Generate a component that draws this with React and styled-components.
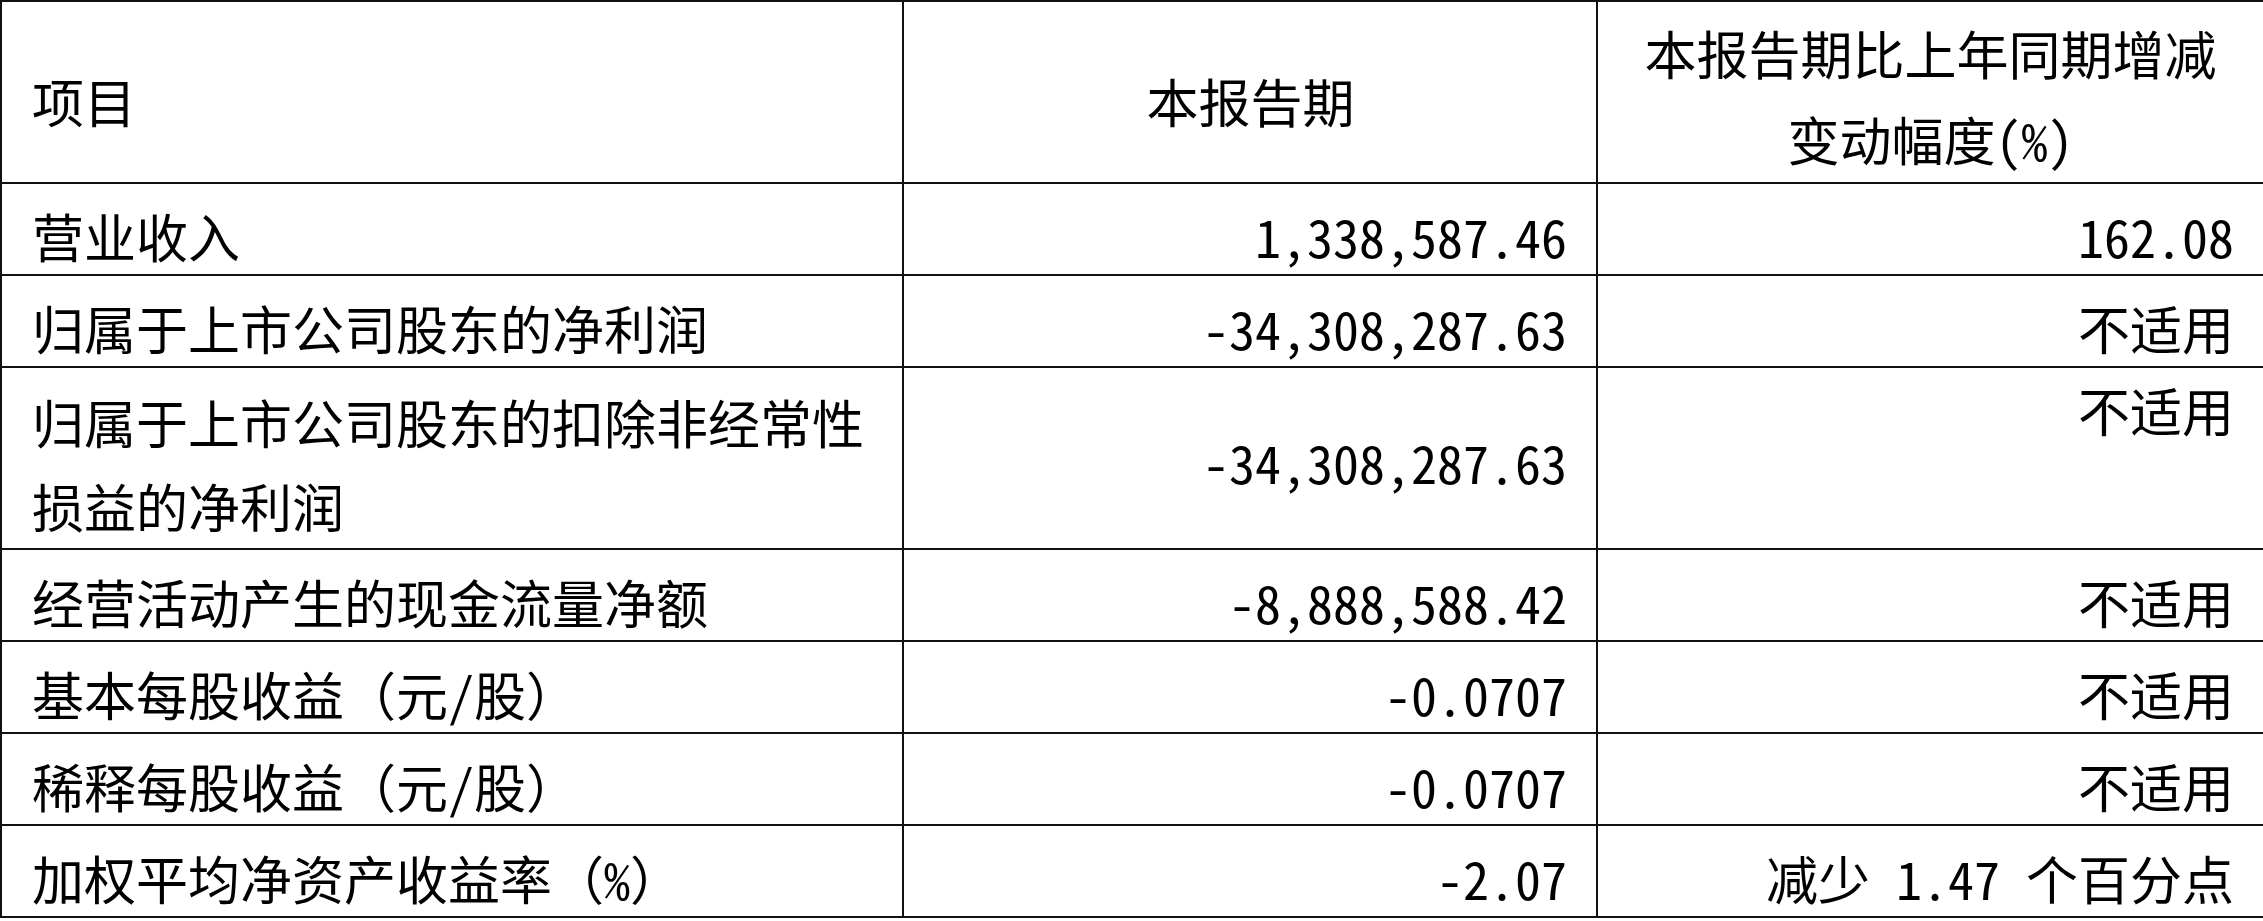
import React from "react";
import styled, { createGlobalStyle } from "styled-components";

const GlobalStyle = createGlobalStyle`
  body {
    margin: 0;
    background: #fff;
  }
`;

const Table = styled.table`
  width: 2263px;
  border-collapse: collapse;
  table-layout: fixed;
  font-family: "Noto Sans Mono CJK SC", "Noto Sans CJK SC", "Liberation Serif", sans-serif;
  font-size: 52px;
  color: #000;
`;

const Row = styled.tr`
  height: ${props => (props.$tall ? "182px" : "92px")};
`;

const Cell = styled.td`
  border: 2px solid #111;
  box-sizing: border-box;
  padding: ${props => props.$pad || "14px 29px 0 30px"};
  text-align: ${props => props.$align || "left"};
  vertical-align: ${props => (props.$top ? "top" : "middle")};
  line-height: ${props => props.$lh || "74px"};
  font-weight: 400;
  white-space: ${props => (props.$wrap ? "normal" : "nowrap")};
`;

const rows = [
  { label: "营业收入", value: "1,338,587.46", change: "162.08" },
  { label: "归属于上市公司股东的净利润", value: "-34,308,287.63", change: "不适用" },
  {
    label: "归属于上市公司股东的扣除非经常性损益的净利润",
    value: "-34,308,287.63",
    change: "不适用",
    tall: true,
  },
  { label: "经营活动产生的现金流量净额", value: "-8,888,588.42", change: "不适用" },
  { label: "基本每股收益（元/股）", value: "-0.0707", change: "不适用" },
  { label: "稀释每股收益（元/股）", value: "-0.0707", change: "不适用" },
  { label: "加权平均净资产收益率（%）", value: "-2.07", change: "减少 1.47 个百分点" },
];

const App = () => {
  return (
    <>
      <GlobalStyle />
      <Table>
        <colgroup>
          <col style={{ width: "902px" }} />
          <col style={{ width: "694px" }} />
          <col style={{ width: "667px" }} />
        </colgroup>
        <tbody>
          <Row $tall>
            <Cell as="th" $pad="18px 29px 0 30px">项目</Cell>
            <Cell as="th" $pad="18px 29px 0 30px" $align="center">本报告期</Cell>
            <Cell as="th" $pad="8px 20px 0" $lh="86px" $align="center">
              本报告期比上年同期增减
              <br />
              变动幅度(%)
            </Cell>
          </Row>
          {rows.map(row => (
            <Row key={row.label} $tall={row.tall}>
              <Cell
                $wrap={row.tall}
                $lh={row.tall ? "84px" : undefined}
                $pad={row.tall ? "12px 29px 0 30px" : undefined}
              >
                {row.label}
              </Cell>
              <Cell $align="right" $pad={row.tall ? "8px 29px 0 30px" : undefined}>
                {row.value}
              </Cell>
              <Cell
                $align="right"
                $top={row.tall}
                $pad={row.tall ? "5px 29px 0 30px" : undefined}
              >
                {row.change}
              </Cell>
            </Row>
          ))}
        </tbody>
      </Table>
    </>
  );
};

export default App;
